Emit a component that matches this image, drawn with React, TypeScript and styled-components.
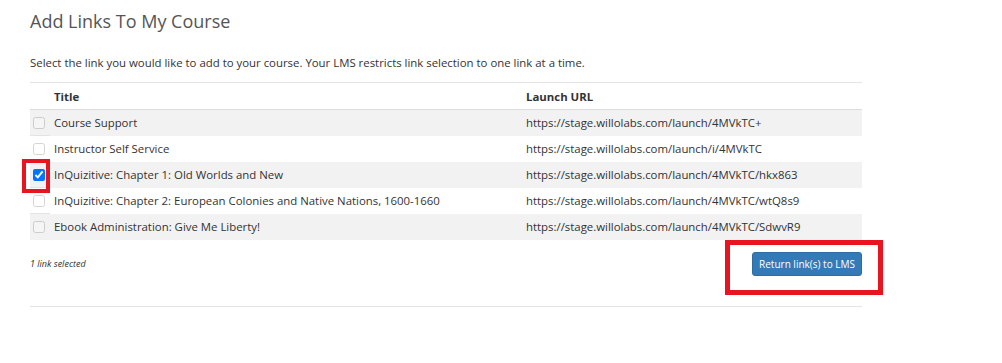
import styled, { createGlobalStyle } from 'styled-components';

const GlobalStyle = createGlobalStyle`
  body {
    margin: 0;
    background: #fff;
    font-family: "Open Sans", "Noto Sans", sans-serif;
    color: #333;
  }
`;

const links = [
  { title: 'Course Support', url: 'https://stage.willolabs.com/launch/4MVkTC+' },
  { title: 'Instructor Self Service', url: 'https://stage.willolabs.com/launch/i/4MVkTC' },
  { title: 'InQuizitive: Chapter 1: Old Worlds and New', url: 'https://stage.willolabs.com/launch/4MVkTC/hkx863', checked: true },
  { title: 'InQuizitive: Chapter 2: European Colonies and Native Nations, 1600-1660', url: 'https://stage.willolabs.com/launch/4MVkTC/wtQ8s9' },
  { title: 'Ebook Administration: Give Me Liberty!', url: 'https://stage.willolabs.com/launch/4MVkTC/SdwvR9' },
];

const App = () => {
  return (
    <Page>
      <GlobalStyle />
      <Heading>Add Links To My Course</Heading>
      <Intro>
        Select the link you would like to add to your course. Your LMS restricts link selection to one link at a time.
      </Intro>
      <Table>
        <thead>
          <tr>
            <CheckCell as="th" />
            <Th $width={464}>Title</Th>
            <Th>Launch URL</Th>
          </tr>
        </thead>
        <tbody>
          {links.map((l, i) => (
            <Row key={l.title} $striped={i % 2 === 0}>
              <CheckCell>
                <Check type="checkbox" defaultChecked={!!l.checked} $checked={!!l.checked} />
                {l.checked && <Highlight $left={-8} $top={-3} $width={28} $height={34} $thick={4} />}
              </CheckCell>
              <Td>{l.title}</Td>
              <Td>{l.url}</Td>
            </Row>
          ))}
        </tbody>
      </Table>
      <Footer>
        <Count>1 link selected</Count>
        <ButtonWrap>
          <ReturnButton>Return link(s) to LMS</ReturnButton>
          <Highlight $left={-27} $top={-12} $width={158} $height={55} $thick={5} />
        </ButtonWrap>
      </Footer>
      <Rule />
    </Page>
  );
};

const Page = styled.div`
  width: 832px;
  padding: 10px 0 0 30px;
`;

const Heading = styled.h2`
  margin: 0;
  font-size: 18px;
  line-height: 22px;
  font-weight: 400;
  color: #555;
`;

const Intro = styled.p`
  margin: 22px 0 10px;
  font-size: 11.4px;
  line-height: 18px;
  color: #333;
`;

const Table = styled.table`
  width: 100%;
  border-collapse: collapse;
  font-size: 11.4px;
  color: #333;
`;

const Th = styled.th<{ $width?: number }>`
  ${(p) => (p.$width ? `width: ${p.$width}px;` : '')}
  text-align: left;
  font-weight: 700;
  height: 26px;
  padding: 0 4px;
  border-top: 1px solid #e3e3e3;
  border-bottom: 1px solid #dcdcdc;
  vertical-align: middle;
`;

const Row = styled.tr<{ $striped: boolean }>`
  height: 26px;
  background: ${(p) => (p.$striped ? '#f2f2f2' : '#fff')};
  & + & td {
    border-top: 1px solid #e0e0e0;
  }
`;

const Td = styled.td`
  padding: 0 4px;
  vertical-align: middle;
`;

const CheckCell = styled.td`
  position: relative;
  width: 17px;
  padding: 0 0 0 3px;
  vertical-align: middle;
  border-top: 1px solid #e3e3e3;
  border-bottom: 1px solid #dcdcdc;
  tbody & {
    border-bottom: none;
  }
`;

const Check = styled.input<{ $checked: boolean }>`
  display: block;
  width: 12px;
  height: 12px;
  margin: 0;
  accent-color: #0075ff;
  opacity: ${(p) => (p.$checked ? 1 : 0.3)};
`;

const Highlight = styled.div<{ $left: number; $top: number; $width: number; $height: number; $thick: number }>`
  position: absolute;
  left: ${(p) => p.$left}px;
  top: ${(p) => p.$top}px;
  width: ${(p) => p.$width}px;
  height: ${(p) => p.$height}px;
  box-sizing: border-box;
  border: ${(p) => p.$thick}px solid #e8141f;
  pointer-events: none;
`;

const Footer = styled.div`
  display: flex;
  align-items: center;
  justify-content: space-between;
  margin-top: 12px;
`;

const Count = styled.em`
  font-size: 9px;
  color: #333;
`;

const ButtonWrap = styled.div`
  position: relative;
`;

const ReturnButton = styled.button`
  display: block;
  width: 110px;
  height: 24px;
  padding: 0;
  border: 1px solid #2e6da4;
  border-radius: 3px;
  background: #337ab7;
  color: #fff;
  font-family: "Open Sans", "Noto Sans", sans-serif;
  font-size: 10px;
`;

const Rule = styled.hr`
  margin: 30px 0 0;
  border: 0;
  border-top: 1px solid #e3e3e3;
`;

export default App;
